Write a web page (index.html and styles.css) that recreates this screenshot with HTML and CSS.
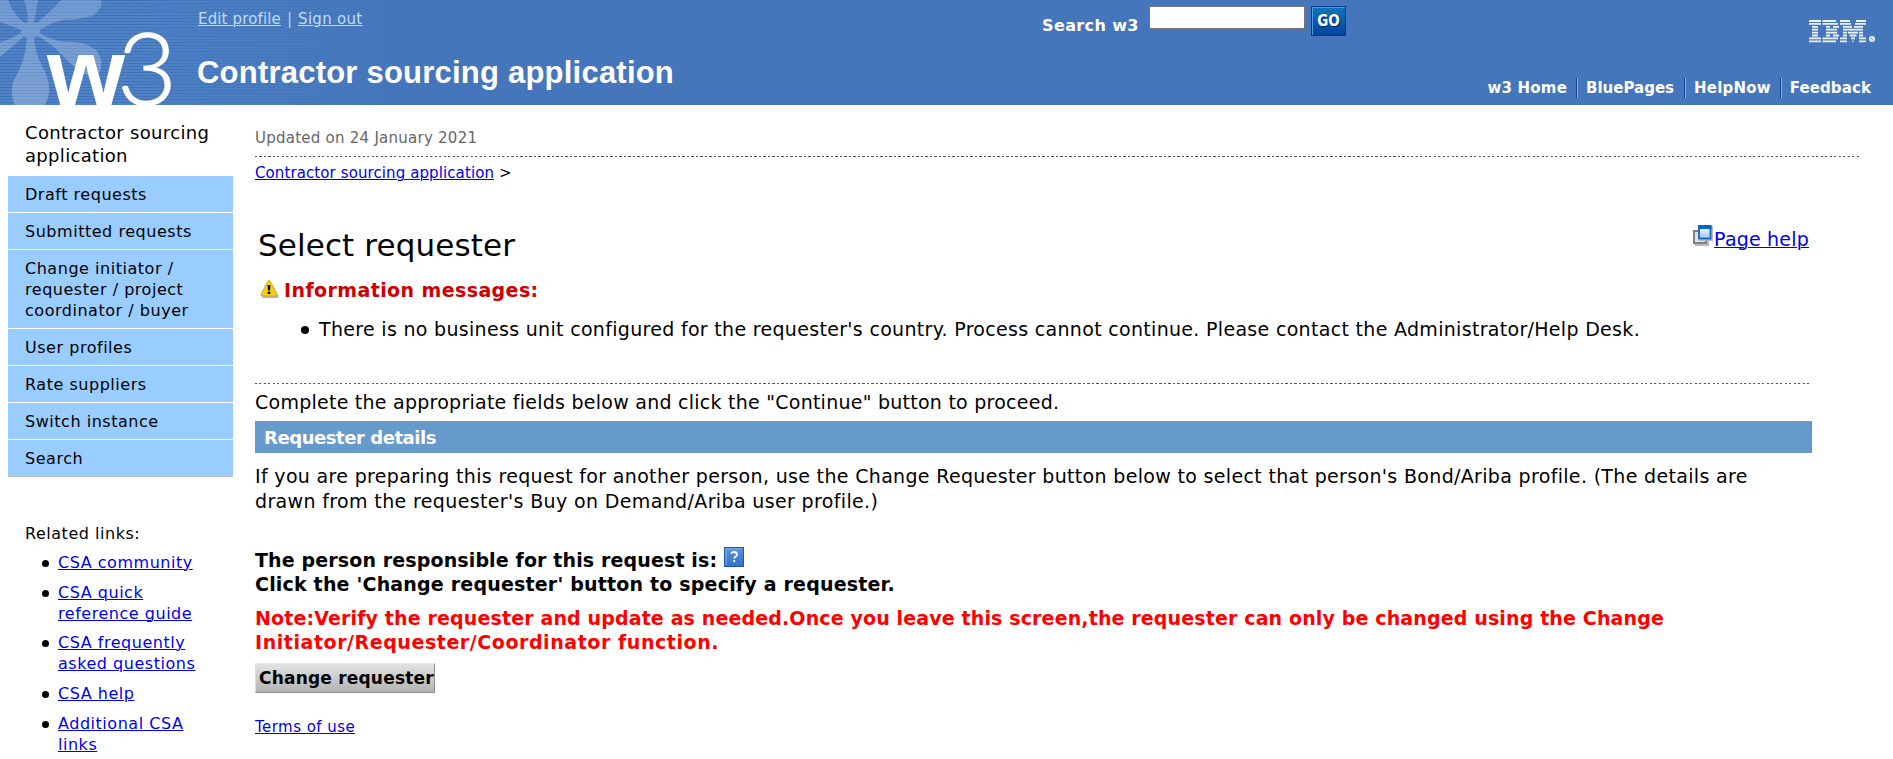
FILE: index.html
```
<!DOCTYPE html>
<html lang="en">
<head>
<meta charset="utf-8">
<title>Select requester</title>
<link rel="stylesheet" href="styles.css">
</head>
<body>
<header class="masthead">
  <svg class="logo" viewBox="0 0 190 105" width="190" height="105" aria-label="w3">
    <defs>
      <linearGradient id="petal" x1="0" y1="0" x2="0" y2="1"><stop offset="0" stop-color="#fff" stop-opacity=".2"/><stop offset="1" stop-color="#fff" stop-opacity=".26"/></linearGradient>
    </defs>
    <g fill="url(#petal)">
      <path d="M0 0H8Q14 15 24 23L28 22Q28 10 24 0H38Q36 12 34 22L37 23Q48 14 61 0H101Q104 8 92 16Q76 20 62 20Q48 24 40 30V33Q50 40 64 42Q84 40 96 50Q104 60 100 72Q92 80 82 72Q72 66 62 55Q50 42 37 36L34 38Q35 52 42 66Q52 84 48 98L45 105H15Q10 94 13 82Q26 60 27 38L24 36Q16 44 8 50L0 57V43Q12 38 21 33V30Q12 26 0 22Z"/>
    </g>
    <text class="logo-w" x="47" y="105" textLength="78" lengthAdjust="spacingAndGlyphs">w</text>
    <text class="logo-3" x="117" y="105" textLength="60" lengthAdjust="spacingAndGlyphs">3</text>
  </svg>
  <div class="brand">
    <div class="account"><a class="edit" href="#">Edit profile</a><span>|</span><a class="out" href="#">Sign out</a></div>
    <div class="app-title">Contractor sourcing application</div>
  </div>
  <form class="search">
    <label for="q">Search w3</label>
    <input id="q" type="text">
    <button type="button" class="go">GO</button>
  </form>
  <div class="corporate">
    <svg class="ibm" viewBox="0 0 67 23" width="67" height="23" aria-label="IBM">
      <g fill="none" stroke="#eef3fb" stroke-width="1.8">
        <path d="M0 1H12M13.500 1H27M31 1H41M47 1H57M0 3.900H12M13.500 3.900H29M31 3.900H42M46 3.900H57M3 6.800H9M17 6.800H21M24 6.800H30M34 6.800H43M45 6.800H54M3 9.700H9M17 9.700H28M34 9.700H54M3 12.600H9M17 12.600H28M34 12.600H38M39 12.600H49M50 12.600H54M3 15.500H9M17 15.500H21M24 15.500H30M34 15.500H38M40.500 15.500H47.500M50 15.500H54M0 18.400H12M13.500 18.400H29M31 18.400H38M42 18.400H46M50 18.400H57M0 21.300H12M13.500 21.300H27M31 21.300H38M43.500 21.300H44.500M50 21.300H57"/>
        <circle cx="63" cy="19" r="2.300" stroke-width="1.500"/><path d="M61.500 20.500L64.500 17.500" stroke-width="1.300"/>
      </g>
    </svg>
    <nav class="global">
      <a class="wide" href="#">w3 Home</a><a href="#">BluePages</a><a class="wide" href="#">HelpNow</a><a class="last" href="#">Feedback</a>
    </nav>
  </div>
</header>
<div class="columns">
  <aside class="side">
    <div class="side-title">Contractor sourcing<br>application</div>
    <ul class="menu">
      <li>Draft requests</li>
      <li>Submitted requests</li>
      <li>Change initiator /<br>requester / project<br>coordinator / buyer</li>
      <li>User profiles</li>
      <li>Rate suppliers</li>
      <li>Switch instance</li>
      <li>Search</li>
    </ul>
    <div class="related-title">Related links:</div>
    <ul class="related">
      <li><a href="#">CSA community</a></li>
      <li><a href="#">CSA quick<br>reference guide</a></li>
      <li><a href="#">CSA frequently<br>asked questions</a></li>
      <li><a href="#">CSA help</a></li>
      <li><a href="#">Additional CSA<br>links</a></li>
    </ul>
  </aside>
  <main class="content">
    <div class="updated">Updated on 24 January 2021</div>
    <div class="dots dots-wide"></div>
    <div class="crumbs"><a href="#">Contractor sourcing application</a> &gt;</div>
    <div class="heading-row">
      <h1>Select requester</h1>
      <a class="page-help" href="#">
        <svg viewBox="0 0 20 21" width="20" height="21">
          <defs><linearGradient id="pane" x1="0" y1="0" x2="0" y2="1"><stop offset="0" stop-color="#fff"/><stop offset="1" stop-color="#9cc4f0"/></linearGradient></defs>
          <rect x="2" y="7" width="14" height="14" fill="#bbb"/>
          <rect x="1" y="6" width="12" height="12" fill="#e0e0e0" stroke="#808080" stroke-width="2"/>
          <rect x="6" y="1" width="14" height="15" fill="#b9b9b9"/>
          <rect x="6" y="1" width="11.500" height="12.500" fill="url(#pane)" stroke="#1464c0" stroke-width="1.800"/>
          <rect x="5" y="0" width="13.500" height="4" fill="#0a62cc"/>
        </svg><span>Page help</span></a>
    </div>
    <div class="info">
      <svg viewBox="0 0 19 18" width="19" height="18">
        <path d="M10.500 1.500L18.500 16Q18.500 18 17 18H2Z" fill="#b5b5a8"/>
        <path d="M9 .5Q10 .5 10.500 1.500L17 14.500Q17.500 16 16 16H2Q.3 16 1 14.500L7.500 1.500Q8 .5 9 .5Z" fill="#f5cd16" stroke="#d3a40c" stroke-width=".8"/>
        <path d="M7.500 5H10.500L10 10.500H8ZM7.700 11.700H10.300V14H7.700Z" fill="#111"/>
      </svg>
      <strong>Information messages:</strong>
    </div>
    <ul class="messages">
      <li>There is no business unit configured for the requester's country. Process cannot continue. Please contact the Administrator/Help Desk.</li>
    </ul>
    <div class="dots dots-main"></div>
    <p class="lead">Complete the appropriate fields below and click the "Continue" button to proceed.</p>
    <h2>Requester details</h2>
    <p class="intro">If you are preparing this request for another person, use the Change Requester button below to select that person's Bond/Ariba profile. (The details are<br><span class="intro-end">drawn from the requester's Buy on Demand/Ariba user profile.)</span></p>
    <p class="responsible">The person responsible for this request is:
      <svg viewBox="0 0 20 20" width="20" height="20">
        <defs><linearGradient id="help" x1="0" y1="0" x2="0" y2="1"><stop offset="0" stop-color="#5b94da"/><stop offset="1" stop-color="#3370cb"/></linearGradient></defs>
        <rect x=".5" y=".5" width="19" height="19" fill="url(#help)" stroke="#1d56a5"/>
        <path d="M2 18V2H18" fill="none" stroke="#83b2e8"/>
        <path d="M7 6.500Q8 5 10 5Q13 5 13 7.500Q13 9 11.500 9.600Q10.200 10.200 10.200 11.600M10.200 13V15" fill="none" stroke="#fff" stroke-width="1.900"/>
      </svg><br><span class="click-note">Click the 'Change requester' button to specify a requester.</span></p>
    <p class="note">Note:Verify the requester and update as needed.Once you leave this screen,the requester can only be changed using the Change<br><span class="note-end">Initiator/Requester/Coordinator function.</span></p>
    <button type="button" class="change">Change requester</button>
    <div class="terms"><a href="#">Terms of use</a></div>
  </main>
</div>
</body>
</html>
```
FILE: styles.css
```
* { box-sizing: border-box; }
html, body { height: 759px; overflow: hidden; }
body { margin: 0; background: #fff; color: #000; font-family: "DejaVu Sans", Verdana, sans-serif; }
p, h1, h2, ul { margin: 0; padding: 0; }
a { color: #00e; text-decoration-thickness: 1px; }

.masthead {
  display: flex;
  height: 105px;
  background:
    linear-gradient(90deg, rgba(69,118,187,0) 0, rgba(69,118,187,0) 110px, #4576bb 390px),
    repeating-linear-gradient(180deg, #3f74bd 0, #3f74bd 1px, #6490cb 2px, #3f74bd 3px);
}
.logo { flex: none; }
.logo text { fill: #fff; }
.logo-w { font: bold 95px "Liberation Sans", sans-serif; }
.logo-3 { font: 300 100px Lato, sans-serif; stroke: #fff; stroke-width: 1.2px; }
.brand { width: 851px; padding-left: 7px; }
.account { display: flex; gap: 6px; margin-left: 1px; padding-top: 9px; font-size: 15px; line-height: 20px; color: #bfdcff; }
.account a { color: #bfdcff; }
.edit { letter-spacing: .15px; }
.out { letter-spacing: .3px; }
.app-title { margin-top: 26px; color: #fff; font: bold 31px/36px "Liberation Sans", Arial, sans-serif; letter-spacing: .22px; white-space: nowrap; }
.search { display: flex; align-items: flex-start; }
.search label { width: 108px; padding: 16px 0 0 1px; color: #fff; font-weight: bold; font-size: 16px; line-height: 20px; letter-spacing: .38px; }
.search input { width: 156px; height: 23px; margin: 6px 6px 0 0; padding: 0; border: 1px solid #767676; background: #fff; }
.go {
  width: 35px; height: 30px; margin-top: 6px; padding: 0;
  border: 1px solid #063a8c;
  background: linear-gradient(#0d75ba, #07439b);
  box-shadow: inset 2px 2px 0 -1px #4d9bdc;
  color: #fff; font: bold 15px/28px "DejaVu Sans Condensed", "DejaVu Sans", sans-serif;
  text-shadow: 1px 1px 1px #02295f;
}
.corporate { display: flex; flex-direction: column; align-items: flex-end; flex: 1; padding: 20px 22px 0 0; }
.ibm { margin-right: -5px; }
.global { display: flex; margin-top: 35px; }
.global a { padding-right: 10px; margin-right: 9px; border-right: 1px solid #10458d; box-shadow: 1px 0 #87aef0; color: #fff; font-weight: bold; font-size: 15px; line-height: 20px; text-decoration: none; }
.global .wide { letter-spacing: .2px; padding-right: 9px; }
.global .last { margin: 0; padding: 0; border: 0; box-shadow: none; letter-spacing: .1px; }

.columns { display: flex; }
.side { width: 247px; padding: 16px 14px 0 8px; font-size: 16px; line-height: 21px; letter-spacing: .53px; }
.side-title { height: 55px; padding-left: 17px; font-size: 18px; line-height: 23px; letter-spacing: .32px; }
.menu { list-style: none; border-bottom: 1px solid #bbb; }
.menu li { padding: 8px 0 7px 17px; background: #9cf; }
.menu li + li { border-top: 1px solid #fff; }
.related-title { margin-top: 46px; padding-left: 17px; }
.related { padding: 8px 0 0 34px; list-style: none; }
.related li { display: flex; margin-bottom: 8.700px; }
.related li::before { content: ""; flex: none; width: 7px; height: 7px; margin: 8px 9px 0 0; border-radius: 50%; background: #000; }

.content { flex: 1; padding: 23px 0 0 8px; white-space: nowrap; }
.updated { color: #666; font-size: 15px; line-height: 20px; letter-spacing: .25px; }
.dots { height: 1px; background: repeating-linear-gradient(90deg, #555 0, #555 2px, #fff 2px, #fff 4.500px); }
.dots-wide { width: 1604px; margin-top: 8px; }
.crumbs { margin-top: 6px; font-size: 15px; line-height: 20px; letter-spacing: .1px; }
.heading-row { display: flex; justify-content: space-between; width: 1554px; height: 94px; padding: 42px 0 0 3px; }
h1 { font-weight: normal; font-size: 31px; line-height: 40px; letter-spacing: .12px; }
.page-help { display: flex; align-items: flex-start; font-size: 19px; line-height: 26px; letter-spacing: .2px; text-decoration: none; }
.page-help svg { margin-right: 1px; }
.page-help span { margin-top: 1px; text-decoration: underline; text-decoration-thickness: 1px; }
.info { display: flex; align-items: center; gap: 5px; padding: 0 0 0 5px; color: #c00; font-size: 19px; line-height: 26px; letter-spacing: .4px; }
.info svg { margin-top: -2px; }
.messages { margin-top: 13px; padding-left: 46px; list-style: none; font-size: 19px; line-height: 26px; letter-spacing: .31px; }
.messages li { display: flex; }
.messages li::before { content: ""; flex: none; width: 8px; height: 8px; margin: 10px 10px 0 0; border-radius: 50%; background: #000; }
.dots-main { width: 1555px; margin-top: 41px; }
.lead { margin-top: 5px; font-size: 19px; line-height: 26px; letter-spacing: .25px; }
h2 { width: 1557px; height: 32px; margin-top: 6px; padding-left: 9px; background: #69c; color: #fff; font-size: 18px; line-height: 33px; letter-spacing: -.44px; }
.intro { margin-top: 11px; font-size: 19px; line-height: 25px; letter-spacing: .33px; }
.intro-end { letter-spacing: .36px; }
.responsible { margin-top: 33px; font-weight: bold; font-size: 19px; line-height: 24px; letter-spacing: .13px; }
.responsible svg { vertical-align: 0; }
.click-note { letter-spacing: .19px; }
.note { margin-top: 10px; color: #f00; font-weight: bold; font-size: 19px; line-height: 24px; letter-spacing: .137px; }
.note-end { letter-spacing: .56px; }
.change {
  display: block; width: 180px; height: 30px; margin-top: 9px; padding: 0 0 0 3px;
  border: 1px solid; border-color: #e8e8e8 #909090 #909090 #ddd;
  background: linear-gradient(#e3e3e3, #b3b3b3);
  color: #000; font: bold 17px/28px "DejaVu Sans", sans-serif; letter-spacing: .2px; text-align: left;
}
.terms { margin-top: 24px; font-size: 15px; line-height: 20px; letter-spacing: .45px; }
```
